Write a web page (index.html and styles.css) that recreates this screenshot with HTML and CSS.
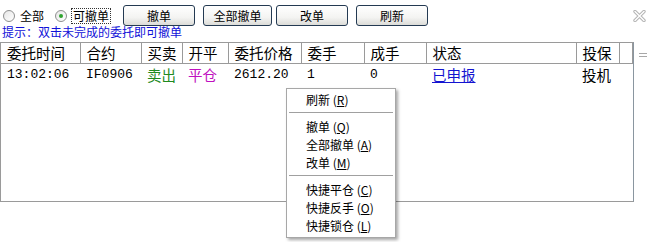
FILE: index.html
```html
<!DOCTYPE html>
<html lang="zh-CN">
<head>
    <meta charset="UTF-8">
    <title>委托</title>
    <link rel="stylesheet" href="styles.css">
</head>
<body>
    <div id="orderPanel">
        <!-- toolbar -->
        <div class="toolbar">
            <label class="radio-item first">
                <span class="radio"></span>
                <span class="radio-text">全部</span>
            </label>
            <label class="radio-item second">
                <span class="radio checked"></span>
                <span class="radio-text focused">可撤单</span>
            </label>
            <button class="btn btn-cancel">撤单</button>
            <button class="btn btn-cancel-all">全部撤单</button>
            <button class="btn btn-modify">改单</button>
            <button class="btn btn-refresh">刷新</button>
            <span class="close-icon">
                <svg width="13" height="12" viewBox="0 0 13 12">
                    <path d="M2 1.5 L11 10.5 M11 1.5 L2 10.5" stroke="#b4b4b4" stroke-width="3.4" stroke-linecap="round"/>
                    <path d="M2 1.5 L11 10.5 M11 1.5 L2 10.5" stroke="#ffffff" stroke-width="1.4" stroke-linecap="round"/>
                </svg>
            </span>
        </div>

        <div class="hint">提示：双击未完成的委托即可撤单</div>

        <div class="grid-area">
            <div class="grid">
                <table>
                    <colgroup>
                        <col style="width:79px">
                        <col style="width:61px">
                        <col style="width:41px">
                        <col style="width:46px">
                        <col style="width:73px">
                        <col style="width:63px">
                        <col style="width:62px">
                        <col style="width:150px">
                        <col style="width:43px">
                        <col style="width:13px">
                    </colgroup>
                    <thead>
                        <tr>
                            <th>委托时间</th>
                            <th>合约</th>
                            <th>买卖</th>
                            <th>开平</th>
                            <th>委托价格</th>
                            <th>委手</th>
                            <th>成手</th>
                            <th>状态</th>
                            <th>投保</th>
                            <th></th>
                        </tr>
                    </thead>
                    <tbody>
                        <tr>
                            <td>13:02:06</td>
                            <td>IF0906</td>
                            <td class="cn sell">卖出</td>
                            <td class="cn close-pos">平仓</td>
                            <td>2612.20</td>
                            <td>1</td>
                            <td>0</td>
                            <td class="cn"><a class="status" href="#">已申报</a></td>
                            <td class="cn">投机</td>
                            <td></td>
                        </tr>
                    </tbody>
                </table>
            </div>
            <div class="splitter"></div>
        </div>

        <!-- right click menu -->
        <div class="ctx-menu">
            <div class="menu-item">刷新 (<u>R</u>)</div>
            <div class="menu-sep"></div>
            <div class="menu-item">撤单 (<u>Q</u>)</div>
            <div class="menu-item">全部撤单 (<u>A</u>)</div>
            <div class="menu-item">改单 (<u>M</u>)</div>
            <div class="menu-sep"></div>
            <div class="menu-item">快捷平仓 (<u>C</u>)</div>
            <div class="menu-item">快捷反手 (<u>O</u>)</div>
            <div class="menu-item">快捷锁仓 (<u>L</u>)</div>
        </div>
    </div>
</body>
</html>
```

FILE: styles.css
```css
body {
    margin: 0;
    padding: 0;
    background: #fff;
    color: #000;
    font-family: "Noto Sans CJK SC", "DejaVu Sans", sans-serif;
    font-size: 12px;
}

#orderPanel {
    position: relative;
    width: 651px;
    height: 242px;
    overflow: hidden;
}

/* toolbar */
.toolbar {
    display: flex;
    align-items: center;
    height: 21px;
    padding-top: 5px;
}

.radio-item {
    display: flex;
    align-items: center;
    gap: 5px;
    line-height: 14px;
}

.radio-item.first {
    margin-left: 3px;
}

.radio-item.second {
    margin-left: 11px;
}

.radio {
    width: 10px;
    height: 10px;
    border: 1px solid #8e8f8f;
    border-radius: 50%;
    background: linear-gradient(135deg, #e6e6e6, #ffffff);
    position: relative;
}

.radio.checked::after {
    content: "";
    position: absolute;
    left: 3px;
    top: 3px;
    width: 4px;
    height: 4px;
    border-radius: 50%;
    background: #2fa22f;
}

.radio-text.focused {
    border: 1px dotted #333;
    padding: 0 1px;
    margin-left: -1px;
}

.btn {
    height: 21px;
    padding: 0;
    border: 1px solid #243a52;
    border-radius: 3px;
    background: linear-gradient(#ffffff 0%, #f4f4f2 60%, #dcdcd8 100%);
    font-family: "Noto Sans CJK SC", sans-serif;
    font-size: 12px;
    line-height: 19px;
    color: #000;
}

.btn-cancel {
    width: 72px;
    margin-left: 12px;
}

.btn-cancel-all {
    width: 69px;
    margin-left: 8px;
}

.btn-modify {
    width: 72px;
    margin-left: 4px;
}

.btn-refresh {
    width: 72px;
    margin-left: 8px;
}

.close-icon {
    margin-left: auto;
    margin-right: 5px;
    height: 12px;
    margin-top: 0;
}

.close-icon svg {
    display: block;
}

.hint {
    color: #1010d8;
    padding-left: 2px;
    height: 13px;
    line-height: 13px;
    margin-top: -1px;
}

/* grid */
.grid-area {
    display: flex;
    margin-top: 4px;
}

.grid {
    width: 632px;
    height: 158px;
    border: 1px solid #9a9a9a;
    border-right-color: #8a96a0;
}

table {
    border-collapse: collapse;
    table-layout: fixed;
    width: 631px;
}

th {
    height: 20px;
    padding: 0 0 0 6px;
    border-right: 1px solid #9a9a9a;
    border-bottom: 1px solid #9a9a9a;
    text-align: left;
    font-weight: normal;
    font-size: 14.5px;
    line-height: 20px;
    white-space: nowrap;
    overflow: hidden;
}

td {
    height: 22px;
    padding: 0 0 0 6px;
    font-family: "Liberation Mono", "Noto Sans CJK SC", monospace;
    font-size: 13px;
    line-height: 22px;
    white-space: nowrap;
}

td.cn {
    font-family: "Noto Sans CJK SC", sans-serif;
    font-size: 14.5px;
}

.sell {
    color: #1f8a1f;
}

.close-pos {
    color: #c010c0;
}

.status {
    color: #1414d0;
    text-decoration: underline;
}

.splitter {
    width: 8px;
    height: 2px;
    margin-left: 5px;
    margin-top: 11px;
    border-top: 1px solid #a8a8a8;
    border-bottom: 1px solid #a8a8a8;
}

/* context menu */
.ctx-menu {
    position: absolute;
    left: 286px;
    top: 88px;
    width: 108px;
    padding: 2px 0;
    background: #fff;
    border: 1px solid #a7a7a7;
    box-shadow: 2px 2px 3px rgba(0, 0, 0, 0.35);
}

.menu-item {
    height: 18px;
    line-height: 18px;
    padding-left: 19px;
    font-size: 12px;
    white-space: nowrap;
}

.menu-sep {
    height: 0;
    margin: 3px 2px 4px;
    border-top: 1px solid #a0a0a0;
    border-bottom: 1px solid #fff;
}
```
